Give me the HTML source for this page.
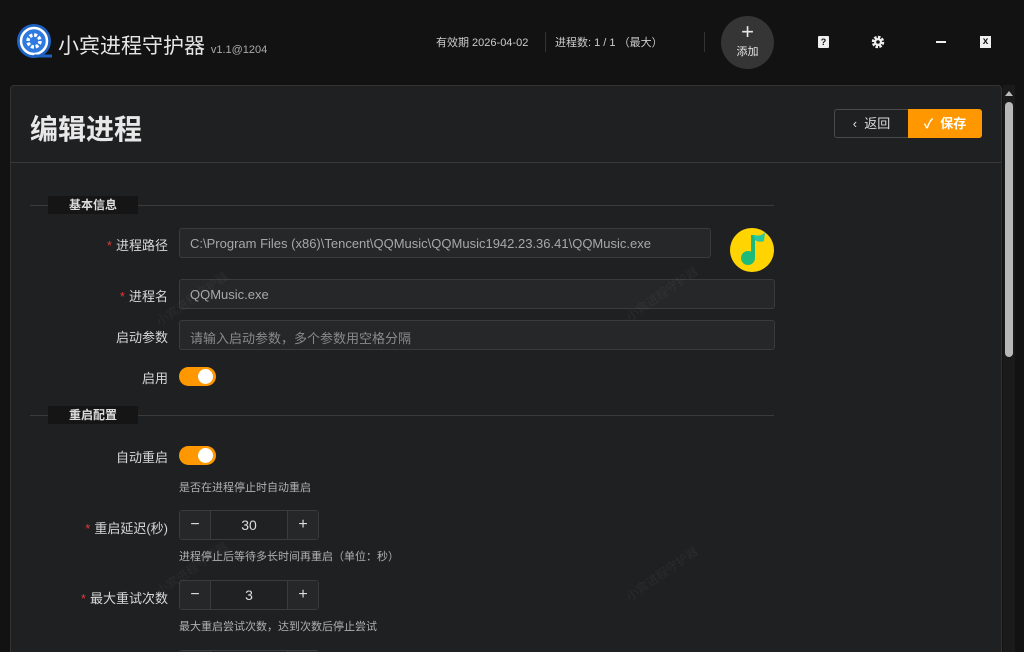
<!DOCTYPE html>
<html><head><meta charset="utf-8"><style>
*{box-sizing:border-box;margin:0;padding:0}
html,body{width:1024px;height:652px;overflow:hidden}
body{background:#121212;font-family:"Liberation Sans","Noto Sans CJK SC",sans-serif;color:#ddd;position:relative}
.a{position:absolute}
.panel{left:10px;top:85px;width:992px;height:580px;background:#1f2022;border:1px solid #333;border-radius:4px}
.lbl{position:absolute;right:856px;font-size:13px;color:#d8d8d8;text-align:right;white-space:nowrap}
.req{color:#e53935;margin-right:4px}
.inp{position:absolute;left:179px;height:30px;background:#262728;border:1px solid #3a3b3d;border-radius:3px;font-size:13px;color:#a8a8a8;padding:7px 10px;white-space:nowrap;overflow:hidden}
.sw{position:absolute;left:179px;width:37px;height:19px;border-radius:10px;background:#ff9800}
.sw::after{content:"";position:absolute;right:3px;top:2px;width:15px;height:15px;border-radius:50%;background:#fff}
.sec{position:absolute;left:30px;width:744px;height:1px;background:#3b3b3b}
.sec span{position:absolute;left:18px;top:-9px;background:#151515;width:90px;height:18px;font-size:12px;font-weight:bold;text-align:center;line-height:18px;color:#ddd}
.hint{position:absolute;left:179px;font-size:11px;color:#b0b0b0}
.num{position:absolute;left:179px;width:140px;height:30px;border:1px solid #3a3b3d;border-radius:3px;display:flex;background:#202122}
.num div{display:flex;align-items:center;justify-content:center;font-size:14px;color:#ddd}
.num .b{width:30px;background:#262728;font-size:16px}
.num .v{flex:1;border-left:1px solid #3a3b3d;border-right:1px solid #3a3b3d}
.wm{position:absolute;font-size:12px;color:rgba(255,255,255,0.05);transform:rotate(-35deg)}
</style></head><body>
<svg class="a" style="left:16px;top:23px" width="38" height="38" viewBox="0 0 38 38">
<circle cx="18" cy="18" r="17" fill="#1e63c4"/><circle cx="18" cy="18" r="13" fill="#2f7ae0" stroke="#fff" stroke-width="2.5"/>
<path d="M18 33 L36 33" stroke="#1e63c4" stroke-width="3"/>
<circle cx="18" cy="18" r="6" fill="none" stroke="#fff" stroke-width="3.5" stroke-dasharray="3 1.7"/><circle cx="18" cy="18" r="2.5" fill="#2f7ae0"/>
</svg>
<div class="a" style="left:58px;top:30px;font-size:21px;color:#e6e6e6">小宾进程守护器 <span style="font-size:11px;color:#aaa">v1.1@1204</span></div>
<div class="a" style="left:436px;top:34px;font-size:11px;color:#ccc">有效期 2026-04-02</div>
<div class="a" style="left:545px;top:32px;width:1px;height:20px;background:#333"></div>
<div class="a" style="left:555px;top:34px;font-size:11px;color:#ccc">进程数: 1 / 1 （最大）</div>
<div class="a" style="left:704px;top:32px;width:1px;height:20px;background:#333"></div>
<div class="a" style="left:721px;top:16px;width:53px;height:53px;border-radius:50%;background:#353535;text-align:center;color:#e6e6e6">
<div style="font-size:22px;line-height:22px;margin-top:5px">+</div><div style="font-size:11px">添加</div></div>
<div class="a" style="left:818px;top:36px;width:11px;height:12px;background:#eee;border-radius:1px;color:#111;font-size:9px;font-weight:bold;text-align:center;line-height:12px">?</div>
<svg class="a" style="left:871px;top:35px" width="14" height="14" viewBox="0 0 14 14"><circle cx="7" cy="7" r="4.5" fill="none" stroke="#eee" stroke-width="3.5" stroke-dasharray="2.3 1.2"/><circle cx="7" cy="7" r="4" fill="#eee"/><circle cx="7" cy="7" r="1.8" fill="#121212"/></svg>
<div class="a" style="left:936px;top:41px;width:10px;height:2px;background:#eee"></div>
<div class="a" style="left:980px;top:36px;width:11px;height:12px;background:#eee;color:#111;font-size:10px;font-weight:bold;text-align:center;line-height:12px">x</div>
<div class="a panel"></div>
<div class="a" style="left:30px;top:108px;font-size:28px;font-weight:bold;color:#e8e8e8">编辑进程</div>
<div class="a" style="left:834px;top:109px;width:74px;height:29px;border:1px solid #4a4a4a;border-right:none;border-radius:3px 0 0 3px;font-size:13px;color:#ddd;text-align:center;line-height:27px">‹&nbsp; 返回</div>
<div class="a" style="left:908px;top:109px;width:74px;height:29px;background:#ff9800;border-radius:0 3px 3px 0;font-size:13px;font-weight:bold;color:#fff;text-align:center;line-height:29px">✓&nbsp; 保存</div>
<div class="a" style="left:11px;top:162px;width:990px;height:1px;background:#383838"></div>
<div class="a" style="left:1003px;top:85px;width:12px;height:567px;background:#1a1a1a"></div>
<div class="a" style="left:1005px;top:91px;width:0;height:0;border-left:4px solid transparent;border-right:4px solid transparent;border-bottom:5px solid #bbb"></div>
<div class="a" style="left:1005px;top:102px;width:8px;height:255px;background:#b8b8b8;border-radius:4px"></div>

<div class="sec" style="top:205px"><span>基本信息</span></div>
<div class="lbl" style="top:235px"><span class="req">*</span>进程路径</div>
<div class="inp" style="top:228px;width:532px">C:\Program Files (x86)\Tencent\QQMusic\QQMusic1942.23.36.41\QQMusic.exe</div>
<svg class="a" style="left:729px;top:227px" width="46" height="46" viewBox="0 0 46 46"><circle cx="23" cy="23" r="22" fill="#ffd400"/><path d="M24 8 L24 30" stroke="#1cb87a" stroke-width="4"/><path d="M24 8 Q33 10 36 5 L35 14 Q30 16 26 13Z" fill="#27c7a0"/><circle cx="19" cy="31" r="7" fill="#1dbb7a"/></svg>
<div class="lbl" style="top:286px"><span class="req">*</span>进程名</div>
<div class="inp" style="top:279px;width:596px">QQMusic.exe</div>
<div class="lbl" style="top:327px">启动参数</div>
<div class="inp" style="top:320px;width:596px;color:#8a8a8a">请输入启动参数，多个参数用空格分隔</div>
<div class="lbl" style="top:368px">启用</div>
<div class="sw" style="top:367px"></div>

<div class="sec" style="top:415px"><span>重启配置</span></div>
<div class="lbl" style="top:447px">自动重启</div>
<div class="sw" style="top:446px"></div>
<div class="hint" style="top:479px">是否在进程停止时自动重启</div>
<div class="lbl" style="top:518px"><span class="req">*</span>重启延迟(秒)</div>
<div class="num" style="top:510px"><div class="b">−</div><div class="v">30</div><div class="b">+</div></div>
<div class="hint" style="top:548px">进程停止后等待多长时间再重启（单位：秒）</div>
<div class="lbl" style="top:588px"><span class="req">*</span>最大重试次数</div>
<div class="num" style="top:580px"><div class="b">−</div><div class="v">3</div><div class="b">+</div></div>
<div class="hint" style="top:618px">最大重启尝试次数，达到次数后停止尝试</div>
<div class="num" style="top:650px"><div class="b"></div><div class="v"></div><div class="b"></div></div>

<div class="wm" style="left:150px;top:290px">小宾进程守护器</div>
<div class="wm" style="left:620px;top:285px">小宾进程守护器</div>
<div class="wm" style="left:150px;top:560px">小宾进程守护器</div>
<div class="wm" style="left:620px;top:565px">小宾进程守护器</div>
</body></html>
